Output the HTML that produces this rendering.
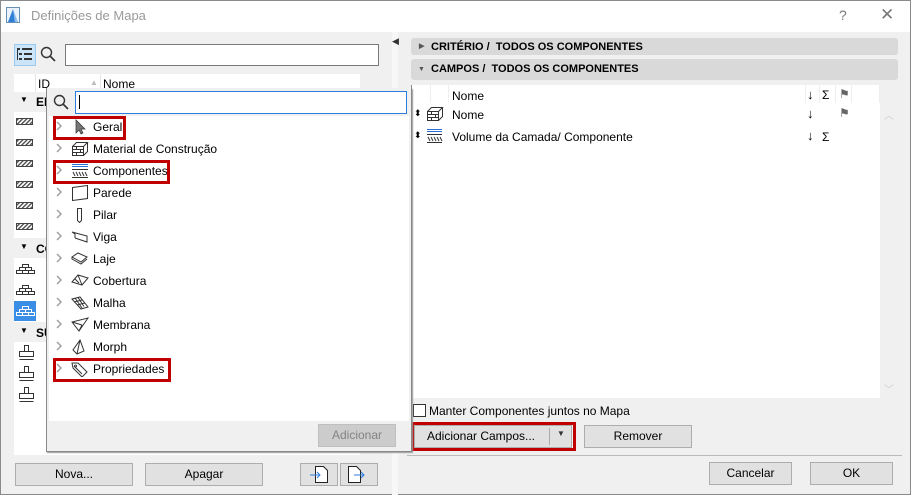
<!DOCTYPE html>
<html><head><meta charset="utf-8"><style>
*{box-sizing:border-box;margin:0;padding:0}
body{width:911px;height:495px;overflow:hidden;background:#f0f0f0;font-family:"Liberation Sans",sans-serif;font-size:12px;color:#000;position:relative}
.a{position:absolute}
.btn{position:absolute;background:#e1e1e1;border:1px solid #adadad;text-align:center;line-height:20px;font-size:12px}
.red{position:absolute;border:3px solid #c00000}
.row{position:absolute;left:49px;height:22px;line-height:22px}
.chev{position:absolute;left:7px;top:5px}
.ic{position:absolute;left:22px;top:3px}
.lab{position:absolute;left:44px;white-space:nowrap}
.hdr{position:absolute;left:411px;width:487px;background:#d9d9d9;border-radius:3px;font-weight:bold;font-size:11px;line-height:18px;padding-left:20px}
</style></head><body>
<div class="a" style="left:0;top:0;width:911px;height:495px;border:1px solid #8a8a8a"></div>
<div class="a" style="left:1px;top:1px;width:909px;height:31px;background:#fff"></div>
<svg class="a" style="left:6px;top:7px" width="14" height="16"><rect x="0.5" y="0.5" width="13" height="15" fill="#eaf3fb" stroke="#6a8fb5"/><path d="M2 15 L7 2 L9 15 Z" fill="#2f7fd6"/><path d="M7 2 L12 15 L9 15Z" fill="#8fbde9"/></svg>
<div class="a" style="left:31px;top:8px;color:#999;font-size:13px">Definições de Mapa</div>
<div class="a" style="left:839px;top:7px;color:#777;font-size:14px">?</div>
<div class="a" style="left:880px;top:5px;color:#777;font-size:17px">✕</div>

<!-- left panel -->
<div class="a" style="left:14px;top:44px;width:22px;height:22px;background:#cce4f7;border:1px solid #99c9ef"></div>
<svg class="a" style="left:17px;top:48px" width="16" height="14"><g fill="#333"><rect x="0" y="0" width="3" height="2"/><rect x="5" y="0" width="10" height="2"/><rect x="2" y="5" width="3" height="2"/><rect x="7" y="5" width="8" height="2"/><rect x="2" y="10" width="3" height="2"/><rect x="7" y="10" width="8" height="2"/><rect x="0" y="2" width="1" height="10"/></g></svg>
<svg class="a" style="left:40px;top:46px" width="16" height="16"><circle cx="6.5" cy="6.5" r="5" fill="none" stroke="#333" stroke-width="1.4"/><path d="M10 10 L15 15" stroke="#333" stroke-width="1.6"/></svg>
<div class="a" style="left:65px;top:44px;width:314px;height:22px;background:#fff;border:1px solid #7a7a7a"></div>
<div class="a" style="left:14px;top:74px;width:346px;height:18px;background:#fff"></div>
<div class="a" style="left:35px;top:74px;width:1px;height:18px;background:#e5e5e5"></div>
<div class="a" style="left:100px;top:74px;width:1px;height:18px;background:#e5e5e5"></div>
<div class="a" style="left:38px;top:77px">ID</div><div class="a" style="left:90px;top:78px;color:#bbb;font-size:8px">▲</div>
<div class="a" style="left:103px;top:77px">Nome</div>
<div class="a" style="left:14px;top:92px;width:346px;height:363px;background:#fff"></div>
<div class="a" style="left:14px;top:92px;width:32px;height:20px;background:#f0f0f0"></div>
<div class="a" style="left:20px;top:95px;font-size:8px">▼</div><div class="a" style="left:36px;top:95px;font-weight:bold">EL</div>
<div class="a" style="left:14px;top:238px;width:32px;height:20px;background:#f0f0f0"></div>
<div class="a" style="left:20px;top:242px;font-size:8px">▼</div><div class="a" style="left:36px;top:242px;font-weight:bold">CO</div>
<div class="a" style="left:14px;top:322px;width:32px;height:20px;background:#f0f0f0"></div>
<div class="a" style="left:20px;top:326px;font-size:8px">▼</div><div class="a" style="left:36px;top:326px;font-weight:bold">SU</div>
<div class="a" style="left:14px;top:301px;width:22px;height:20px;background:#3a8ee6"></div>
<svg class="a" style="left:15px;top:117px" width="20" height="120"><defs><pattern id="h" width="3" height="3" patternUnits="userSpaceOnUse" patternTransform="rotate(45)"><rect width="1.3" height="3" fill="#444"/></pattern></defs>
<g stroke="#444"><rect x="1.5" y="1.5" width="16" height="6" fill="url(#h)"/><rect x="1.5" y="22.5" width="16" height="6" fill="url(#h)"/><rect x="1.5" y="43.5" width="16" height="6" fill="url(#h)"/><rect x="1.5" y="64.5" width="16" height="6" fill="url(#h)"/><rect x="1.5" y="85.5" width="16" height="6" fill="url(#h)"/><rect x="1.5" y="106.5" width="16" height="6" fill="url(#h)"/></g></svg>
<svg class="a" style="left:16px;top:262px" width="20" height="60"><g fill="none" stroke="#333"><path d="M6.5 2.5h6v3h-6zM3.5 5.5h12v3h-12zM0.5 8.5h18v3h-18zM9.5 5.5v3M6.5 8.5v3M12.5 8.5v3"/><path transform="translate(0,21)" d="M6.5 2.5h6v3h-6zM3.5 5.5h12v3h-12zM0.5 8.5h18v3h-18zM9.5 5.5v3M6.5 8.5v3M12.5 8.5v3"/><path transform="translate(0,42)" stroke="#fff" d="M6.5 2.5h6v3h-6zM3.5 5.5h12v3h-12zM0.5 8.5h18v3h-18zM9.5 5.5v3M6.5 8.5v3M12.5 8.5v3"/></g></svg>
<svg class="a" style="left:17px;top:344px" width="20" height="62"><g fill="none" stroke="#333"><path d="M7.5 1.5v6h4v-6zM2.5 7.5h14v5h-14zM2.5 15.5h14"/><path transform="translate(0,21)" d="M7.5 1.5v6h4v-6zM2.5 7.5h14v5h-14zM2.5 15.5h14"/><path transform="translate(0,42)" d="M7.5 1.5v6h4v-6zM2.5 7.5h14v5h-14zM2.5 15.5h14"/></g></svg>
<div class="btn" style="left:15px;top:463px;width:118px;height:23px">Nova...</div>
<div class="btn" style="left:145px;top:463px;width:118px;height:23px">Apagar</div>
<div class="btn" style="left:300px;top:463px;width:38px;height:23px"></div>
<div class="btn" style="left:340px;top:463px;width:38px;height:23px"></div>
<svg class="a" style="left:308px;top:465px" width="64" height="20"><path d="M7.5 1.5h8l4 4v12h-12z" fill="#fff" stroke="#222"/><path d="M2 10h10M9 7l3 3-3 3" stroke="#2b7de0" fill="none"/><path d="M40.5 1.5h8l4 4v12h-12z" fill="#fff" stroke="#222"/><path d="M46 10h10M53 7l3 3-3 3" stroke="#2b7de0" fill="none"/></svg>

<!-- divider -->
<div class="a" style="left:392px;top:32px;width:6px;height:463px;background:#f7f7f7"></div>
<div class="a" style="left:392px;top:36px;font-size:9px;color:#333">◀</div>

<!-- right -->
<div class="hdr" style="top:38px;height:17px"><span class="a" style="left:8px;font-size:7px;color:#555">▶</span>CRITÉRIO /&nbsp; TODOS OS COMPONENTES</div>
<div class="hdr" style="top:59px;height:21px;line-height:21px"><span class="a" style="left:7px;font-size:7px;color:#555">▼</span>CAMPOS /&nbsp; TODOS OS COMPONENTES</div>
<div class="a" style="left:411px;top:85px;width:470px;height:313px;background:#fff;border-left:1px solid #888"></div>
<div class="a" style="left:880px;top:85px;width:18px;height:313px;background:#f0f0f0"></div>
<div class="a" style="left:884px;top:107px;color:#ccc;font-size:10px">︿</div>
<div class="a" style="left:884px;top:381px;color:#ccc;font-size:10px">﹀</div>
<div class="a" style="left:430px;top:85px;width:1px;height:18px;background:#eee"></div>
<div class="a" style="left:448px;top:85px;width:1px;height:18px;background:#eee"></div>
<div class="a" style="left:805px;top:85px;width:1px;height:18px;background:#eee"></div>
<div class="a" style="left:819px;top:85px;width:1px;height:18px;background:#eee"></div>
<div class="a" style="left:835px;top:85px;width:1px;height:18px;background:#eee"></div>
<div class="a" style="left:851px;top:85px;width:1px;height:18px;background:#eee"></div>
<div class="a" style="left:879px;top:85px;width:1px;height:18px;background:#eee"></div>
<div class="a" style="left:452px;top:89px">Nome</div>
<div class="a" style="left:807px;top:87px;font-size:13px">↓</div><div class="a" style="left:822px;top:88px">Σ</div><div class="a" style="left:839px;top:87px;color:#666">⚑</div>
<div class="a" style="left:414px;top:108px;font-size:9px">⬍</div>
<svg class="a" style="left:426px;top:106px" width="18" height="16"><g fill="none" stroke="#333"><path d="M1.5 5.5h11v9h-11zM1.5 5.5l4-4h11l-4 4M16.5 1.5v9l-4 4M1.5 8.5h11M1.5 11.5h11M5.5 5.5v3M9.5 8.5v3M5.5 11.5v3"/></g></svg>
<div class="a" style="left:452px;top:108px">Nome</div>
<div class="a" style="left:807px;top:106px;font-size:13px">↓</div><div class="a" style="left:839px;top:106px;color:#666">⚑</div>
<div class="a" style="left:414px;top:130px;font-size:9px">⬍</div>
<svg class="a" style="left:426px;top:128px" width="18" height="16"><path d="M1 1.5h15M1 3.5h15" stroke="#2b6fd6"/><path d="M1 6.5h15M2 9l2 4M5 9l2 4M8 9l2 4M11 9l2 4M14 9l2 4M1 14.5h15" stroke="#333"/></svg>
<div class="a" style="left:452px;top:130px">Volume da Camada/ Componente</div>
<div class="a" style="left:807px;top:128px;font-size:13px">↓</div><div class="a" style="left:822px;top:130px">Σ</div>

<div class="a" style="left:413px;top:404px;width:13px;height:13px;background:#fff;border:1px solid #333"></div>
<div class="a" style="left:429px;top:404px">Manter Componentes juntos no Mapa</div>
<div class="red" style="left:411px;top:422px;width:165px;height:29px"></div>
<div class="btn" style="left:414px;top:425px;width:158px;height:23px;padding-right:24px">Adicionar Campos...</div>
<div class="a" style="left:549px;top:428px;width:1px;height:17px;background:#aaa"></div>
<div class="a" style="left:557px;top:429px;font-size:8px;color:#333">▼</div>
<div class="btn" style="left:584px;top:425px;width:108px;height:23px">Remover</div>
<div class="a" style="left:407px;top:455px;width:495px;height:1px;background:#bbb"></div>
<div class="btn" style="left:709px;top:462px;width:83px;height:23px">Cancelar</div>
<div class="btn" style="left:810px;top:462px;width:83px;height:23px">OK</div>

<!-- popup -->
<div class="a" style="left:46px;top:88px;width:366px;height:364px;background:#f0f0f0;border:1px solid #888;border-top:none;box-shadow:1px 1px 1px #999"></div>
<svg class="a" style="left:53px;top:94px" width="16" height="16"><circle cx="6.5" cy="6.5" r="5" fill="none" stroke="#333" stroke-width="1.4"/><path d="M10 10 L15 15" stroke="#333" stroke-width="1.6"/></svg>
<div class="a" style="left:75px;top:91px;width:332px;height:23px;background:#fff;border:1px solid #2b7de0"></div>
<div class="a" style="left:79px;top:95px;width:1px;height:14px;background:#000"></div>
<div class="a" style="left:49px;top:116px;width:360px;height:305px;background:#fff"></div>
<svg width="0" height="0" style="position:absolute"><defs><path id="cv" d="M1 1l4 4-4 4" fill="none" stroke="#a0a0a0" stroke-width="1.5"/></defs></svg>
<div class="row" style="top:116px"><svg class="chev" width="8" height="12"><use href="#cv"/></svg><svg class="ic" width="16" height="16"><path d="M5 1v13l3-3 2 4 2-1-2-4h4z" fill="#777" stroke="#333" stroke-width=".7"/></svg><span class="lab">Geral</span></div>
<div class="row" style="top:138px"><svg class="chev" width="8" height="12"><use href="#cv"/></svg><svg class="ic" width="18" height="16"><g fill="none" stroke="#333"><path d="M1.5 5.5h11v9h-11zM1.5 5.5l4-4h11l-4 4M16.5 1.5v9l-4 4M1.5 8.5h11M1.5 11.5h11M5.5 5.5v3M9.5 8.5v3M5.5 11.5v3"/></g></svg><span class="lab">Material de Construção</span></div>
<div class="row" style="top:160px"><svg class="chev" width="8" height="12"><use href="#cv"/></svg><svg class="ic" width="18" height="16"><path d="M1 1.5h16M1 3.5h16" stroke="#2b6fd6"/><path d="M1 6.5h16M2 9l2 4M5 9l2 4M8 9l2 4M11 9l2 4M14 9l2 4M1 14.5h16" stroke="#333"/></svg><span class="lab">Componentes</span></div>
<div class="row" style="top:182px"><svg class="chev" width="8" height="12"><use href="#cv"/></svg><svg class="ic" width="18" height="16"><path d="M1.5 2.5l15-2v13l-15 2z" fill="none" stroke="#333"/></svg><span class="lab">Parede</span></div>
<div class="row" style="top:204px"><svg class="chev" width="8" height="12"><use href="#cv"/></svg><svg class="ic" width="18" height="16"><path d="M6.5 1.5h4v12l-2 2-2-2z" fill="none" stroke="#333"/></svg><span class="lab">Pilar</span></div>
<div class="row" style="top:226px"><svg class="chev" width="8" height="12"><use href="#cv"/></svg><svg class="ic" width="18" height="16"><path d="M1 3l15 4v6L4 9M1 3l3 2v4" fill="none" stroke="#333"/></svg><span class="lab">Viga</span></div>
<div class="row" style="top:248px"><svg class="chev" width="8" height="12"><use href="#cv"/></svg><svg class="ic" width="18" height="16"><path d="M1 6l6-4 9 4-6 5zM1 6v2l9 5 6-5" fill="none" stroke="#333"/></svg><span class="lab">Laje</span></div>
<div class="row" style="top:270px"><svg class="chev" width="8" height="12"><use href="#cv"/></svg><svg class="ic" width="18" height="16"><path d="M1 9l6-7 10 3-6 7zM7 2l4 10M4 6l4 4" fill="none" stroke="#333"/></svg><span class="lab">Cobertura</span></div>
<div class="row" style="top:292px"><svg class="chev" width="8" height="12"><use href="#cv"/></svg><svg class="ic" width="18" height="16"><path d="M1 4l8-2 8 10-7 2zM4 3l7 10M7 2.5l6 9M3 7l8-2M6 10l8-2" fill="none" stroke="#333"/></svg><span class="lab">Malha</span></div>
<div class="row" style="top:314px"><svg class="chev" width="8" height="12"><use href="#cv"/></svg><svg class="ic" width="18" height="16"><path d="M1 5l7 9 9-13zM1 5l10 3M8 14l3-6" fill="none" stroke="#333"/></svg><span class="lab">Membrana</span></div>
<div class="row" style="top:336px"><svg class="chev" width="8" height="12"><use href="#cv"/></svg><svg class="ic" width="18" height="16"><path d="M9 1l-7 10 4 4 7-3zM9 1l4 11M9 1l-3 14" fill="none" stroke="#333"/></svg><span class="lab">Morph</span></div>
<div class="row" style="top:358px"><svg class="chev" width="8" height="12"><use href="#cv"/></svg><svg class="ic" width="18" height="16"><path d="M1 2h6l9 9-5 5-9-9zM3 5l8 8M4.5 4a1 1 0 1 0 .1 0" fill="none" stroke="#333"/></svg><span class="lab">Propriedades</span></div>
<div class="red" style="left:53px;top:116px;width:73px;height:24px"></div>
<div class="red" style="left:53px;top:160px;width:117px;height:24px"></div>
<div class="red" style="left:53px;top:358px;width:118px;height:24px"></div>
<div class="btn" style="left:318px;top:424px;width:78px;height:23px;background:#ccc;border-color:#bfbfbf;color:#838383">Adicionar</div>
</body></html>
